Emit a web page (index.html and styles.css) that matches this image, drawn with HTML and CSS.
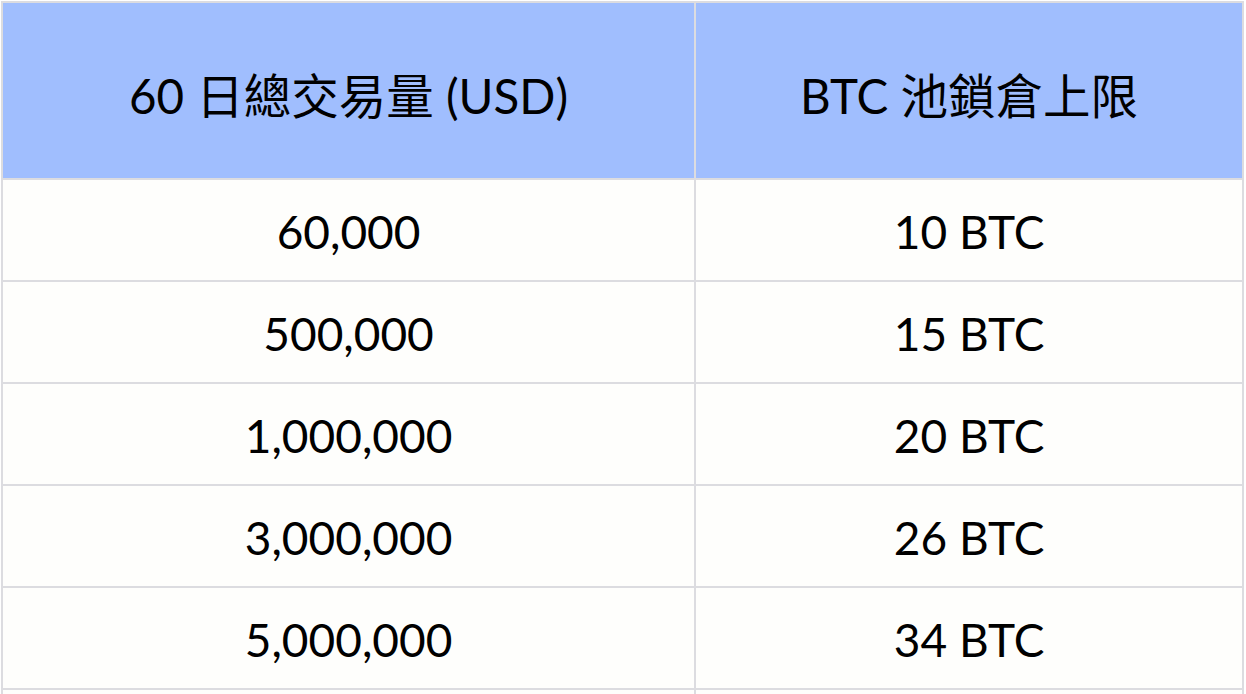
FILE: index.html
```html
<!DOCTYPE html>
<html lang="zh-Hant">
<head>
<meta charset="utf-8">
<link rel="stylesheet" href="styles.css">
</head>
<body>
<table class="tiers">
  <thead>
    <tr>
      <th class="col-a">60 日總交易量 (USD)</th>
      <th class="col-b">BTC 池鎖倉上限</th>
    </tr>
  </thead>
  <tbody>
    <tr><td>60,000</td><td>10 BTC</td></tr>
    <tr><td>500,000</td><td>15 BTC</td></tr>
    <tr><td>1,000,000</td><td>20 BTC</td></tr>
    <tr><td>3,000,000</td><td>26 BTC</td></tr>
    <tr><td>5,000,000</td><td>34 BTC</td></tr>
    <tr class="stub"><td></td><td></td></tr>
  </tbody>
</table>
</body>
</html>
```
FILE: styles.css
```css
html, body {
  margin: 0;
  padding: 0;
  background: #ffffff;
}
body {
  padding: 1px 0 0 1px;
  overflow: hidden;
  height: 694px;
  box-sizing: border-box;
}
.tiers {
  border-collapse: collapse;
  table-layout: fixed;
  width: 1243px;
  font-family: "Lato", "Noto Sans CJK TC", sans-serif;
  font-size: 46px;
  color: #000;
  background: #fefefc;
}
.tiers th, .tiers td {
  border: 2px solid #dcdce0;
  text-align: center;
  padding: 0;
  font-weight: 400;
}
.tiers th {
  background: #a0befe;
  height: 177px;
  padding-top: 6px;
  box-sizing: border-box;
  font-size: 47.5px;
}
.col-a { width: 692px; }
.col-b { width: 547px; }
.tiers td {
  height: 102px;
  padding-top: 2px;
  box-sizing: border-box;
}
.tiers .stub td {
  height: 20px;
}
```
